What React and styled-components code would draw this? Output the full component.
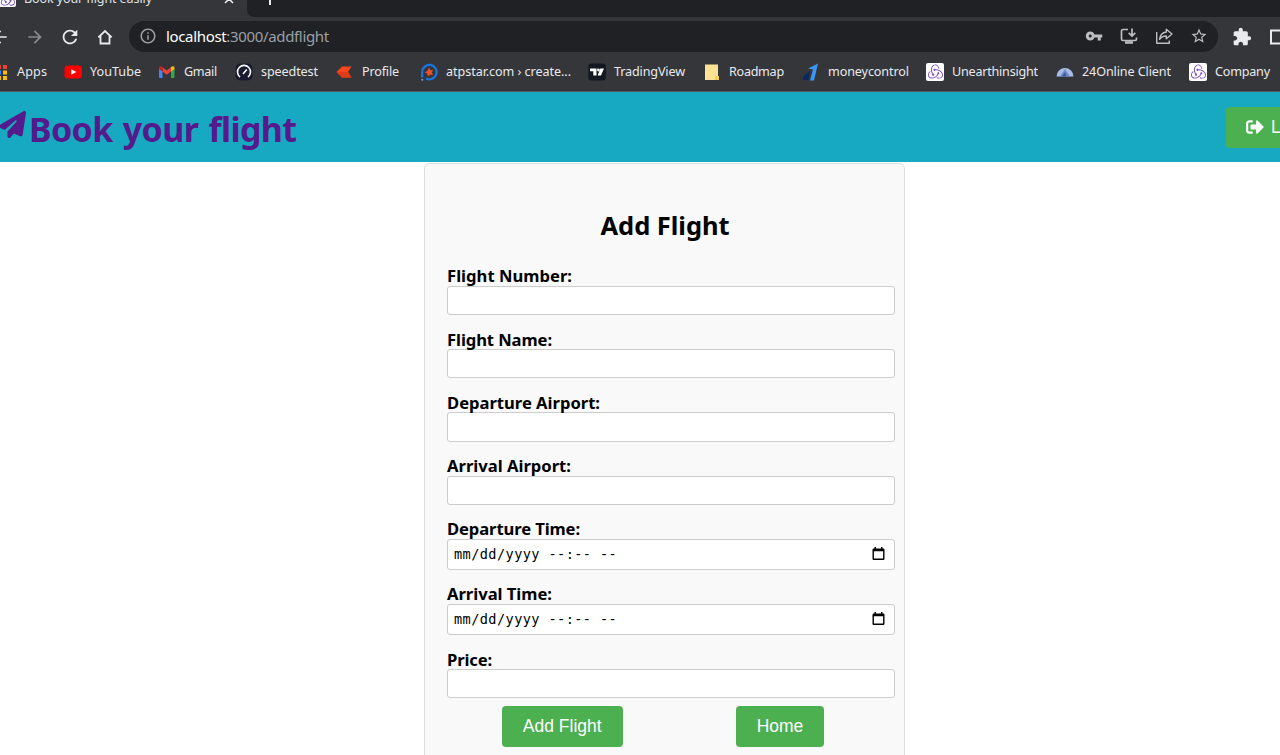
import React, { useLayoutEffect, useRef } from "react";
import styled, { createGlobalStyle } from "styled-components";
import { MdArrowBack, MdArrowForward, MdRefresh, MdInfoOutline, MdVpnKey, MdStarBorder, MdExtension } from "react-icons/md";
import { FaPaperPlane } from "react-icons/fa6";
import { FaSignOutAlt } from "react-icons/fa";
import { SiRedux } from "react-icons/si";

const GlobalStyle = createGlobalStyle`
  * { box-sizing: border-box; }
  body {
    margin: 0;
    background: #fff;
    overflow: hidden;
    font-family: "Noto Sans", "Open Sans", sans-serif;
  }
`;

const Screen = styled.div`
  width: 1280px;
  height: 755px;
  overflow: hidden;
  display: flex;
  flex-direction: column;
`;

/* Text tracked so that it fills a known width */
const Line = styled.span`
  display: inline-block;
  white-space: pre;
  flex: none;
`;

function Tracked({ width, children }) {
  const ref = useRef(null);
  useLayoutEffect(() => {
    const el = ref.current;
    el.style.letterSpacing = "0px";
    const natural = el.getBoundingClientRect().width;
    el.style.letterSpacing = `${(width - natural) / (el.textContent.length - 0.5)}px`;
  }, [width, children]);
  return <Line ref={ref}>{children}</Line>;
}

/* ---------- browser chrome ---------- */

const TabStrip = styled.div`
  flex: none;
  height: 17px;
  display: flex;
  background: #35363a;
  overflow: hidden;
`;

const ActiveTab = styled.div`
  width: 247px;
  height: 17px;
  display: flex;
  align-items: center;
  color: #dfe1e5;
  font-size: 12.5px;
  line-height: 17px;
`;

const TabIcon = styled.span`
  display: flex;
  width: 17px;
  height: 17px;
  margin: -20px 8px 0 -1px;
  align-items: center;
  justify-content: center;
  border-radius: 2px;
  background: #fff;
  color: #764abc;
`;

const TabTitle = styled.span`
  width: 200px;
  margin-top: -20px;
`;

const TabClose = styled.svg`
  width: 10px;
  height: 10px;
  margin-top: -19px;
`;

const StripRest = styled.div`
  flex: 1;
  display: flex;
  align-items: flex-start;
  background: #202124;
  border-bottom-left-radius: 7px;
  padding-left: 17px;
`;

const Toolbar = styled.div`
  flex: none;
  height: 40px;
  display: flex;
  align-items: center;
  background: #35363a;
  color: #e8eaed;
  padding-bottom: 1px;
`;

const NavIcons = styled.div`
  flex: none;
  display: flex;
  gap: 15px;
  width: 139px;
  margin-left: -10px;
  svg { width: 20px; height: 20px; flex: none; }
  svg:nth-child(2) { color: #898a8d; }
  svg:nth-child(3) { width: 22px; height: 22px; margin: -1px; }
`;

const AddressBar = styled.div`
  flex: none;
  width: 1089px;
  height: 31px;
  display: flex;
  align-items: center;
  padding: 0 10px 1px 10px;
  border-radius: 16px;
  background: #202124;
  color: #9aa0a6;
  font-size: 15px;
  > svg { width: 18px; height: 18px; margin-right: 9px; }
`;

const Host = styled.span`
  color: #fff;
`;

const BarActions = styled.div`
  margin-left: auto;
  display: flex;
  gap: 17px;
  color: #bcbec2;
  svg { width: 18px; height: 18px; }
`;

const Extensions = styled.div`
  display: flex;
  flex: none;
  margin-left: 14px;
  gap: 16px;
  svg { width: 20px; height: 20px; flex: none; }
`;

const Bookmarks = styled.div`
  flex: none;
  height: 35px;
  display: flex;
  align-items: center;
  padding-bottom: 5px;
  margin-left: -10px;
  background: #35363a;
  border-bottom: 1px solid #55585c;
`;

const Bookmark = styled.div`
  flex: none;
  width: ${(p) => p.$w}px;
  display: flex;
  align-items: center;
  gap: ${(p) => p.$gap || 8}px;
  color: #e8eaed;
  font-size: 12.6px;
  line-height: 18px;
  > svg { width: 18px; height: 18px; flex: none; }
`;

const ReduxTile = styled.span`
  flex: none;
  width: 18px;
  height: 18px;
  display: flex;
  align-items: center;
  justify-content: center;
  border-radius: 2px;
  background: #fff;
  color: #764abc;
`;

/* ---------- page ---------- */

const Header = styled.header`
  flex: none;
  height: 70px;
  display: flex;
  align-items: flex-start;
  background: #17a9c1;
`;

const Brand = styled.div`
  display: flex;
  align-items: flex-start;
  color: #551a8b;
  font-size: 34px;
  line-height: 48px;
  font-weight: 700;
  word-spacing: 2px;
  padding-top: 13px;
  > svg { width: 27px; height: 27px; margin: 6px 3px 0 -1px; }
`;

const GreenButton = styled.button`
  flex: none;
  height: 41px;
  width: ${(p) => p.$w}px;
  border: 0;
  padding: 0 0 1px;
  border-radius: 4px;
  background: #4caf50;
  color: #fff;
  font: 17.5px/38px "Liberation Sans", Arial, sans-serif;
  text-align: center;
`;

const Logout = styled(GreenButton)`
  display: flex;
  align-items: center;
  margin: 15px -46px 0 auto;
  padding: 0 0 2px 20px;
  gap: 7px;
`;

const Card = styled.main`
  flex: none;
  width: 481px;
  height: 640px;
  margin: 1px 0 0 424px;
  padding: 41px 9px 0 22px;
  border: 1px solid #ddd;
  border-radius: 6px;
  background: #f9f9f9;
`;

const Title = styled.h2`
  margin: 0 12px 21.4px 0;
  font-size: 25.5px;
  line-height: 40px;
  height: 38px;
  font-weight: 700;
  text-align: center;
`;

const Field = styled.div`
  height: ${(p) => (p.$tall ? 65.2 : 63.2)}px;
  font-size: 16.6px;
  font-weight: 700;
  line-height: 23px;
`;

const InputBox = styled.div`
  height: ${(p) => (p.$tall ? 31.2 : 29.2)}px;
  display: flex;
  align-items: center;
  justify-content: space-between;
  padding: 0 9px 1px 6px;
  border: 1px solid #ccc;
  border-radius: 3px;
  background: #fff;
  font: 13.6px "DejaVu Sans Mono", monospace;
`;

const LabelRow = styled.div`
  height: 21.6px;
`;

const Actions = styled.div`
  display: flex;
  margin-top: -4.6px;
  padding-left: 55px;
  gap: 113.5px;
`;

const HomeIcon = () => (
  <svg viewBox="0 0 20 20" fill="none" stroke="currentColor" strokeWidth="1.8">
    <path d="M3.300 10.300 10 4l6.700 6.300M5.500 8.700v7.800h9V8.700" />
  </svg>
);

const InstallIcon = () => (
  <svg viewBox="0 0 18 18" fill="none" stroke="currentColor" strokeWidth="1.7">
    <path d="M8 2.500H3a1.500 1.500 0 0 0-1.500 1.500v8A1.500 1.500 0 0 0 3 13.500h12a1.500 1.500 0 0 0 1.500-1.500v-1.500M12 1.500v7M8.700 5.800 12 9.100l3.300-3.300" />
    <path d="M5 15.500h8" strokeWidth="2.500" />
  </svg>
);

const ShareIcon = () => (
  <svg viewBox="0 0 18 18" fill="none" stroke="currentColor" strokeWidth="1.4" strokeLinejoin="round">
    <path d="M1.700 5v11.300h12.600V13.500" />
    <path d="M11.300 2.300 17 7l-5.700 4.700V9C8 9 6 10 4.600 12.300 5 8.200 7.300 5.500 11.300 5Z" />
  </svg>
);

const PanelIcon = () => (
  <svg viewBox="0 0 20 20">
    <path fill="none" stroke="currentColor" strokeWidth="2" d="M3 3.500h15v13H3z" />
    <path fill="currentColor" d="M12 3h7v14h-7z" />
  </svg>
);

const CalendarIcon = () => (
  <svg width="13" height="14" viewBox="0 0 13 14">
    <path d="M2.500 0H4v1.500h5V0h1.500v1.500h.8a1.200 1.200 0 0 1 1.200 1.200v9a1.200 1.200 0 0 1-1.200 1.200H1.700a1.200 1.200 0 0 1-1.200-1.200v-9a1.200 1.200 0 0 1 1.200-1.200h.8zM1.900 4.200v7.400h9.200V4.200z" fillRule="evenodd" />
  </svg>
);

const AppsIcon = () => (
  <svg viewBox="0 0 18 18">
    <path fill="#ea4335" d="M1 2h4v4H1zM7 2h4v4H7zM13 2h4v4h-4z" />
    <path fill="#4285f4" d="M1 7.500h4v4H1zM7 7.500h4v4H7z" />
    <path fill="#fbbc04" d="M13 7.500h4v4h-4zM7 13h4v4H7zM13 13h4v4h-4z" />
  </svg>
);

const YouTubeIcon = () => (
  <svg viewBox="0 0 18 18">
    <rect x="0.500" y="2.500" width="17.500" height="13" rx="3.200" fill="#f00" />
    <path fill="#fff" d="m7.300 6.300 5 2.750-5 2.750z" />
  </svg>
);

const GmailIcon = () => (
  <svg viewBox="0 0 18 18">
    <path fill="#4285f4" d="M1 5.500 4.500 8v7H2a1 1 0 0 1-1-1z" />
    <path fill="#34a853" d="M13 8l3.500-2.500V14a1 1 0 0 1-1 1H13z" />
    <path fill="#ea4335" d="M4.500 4.200 8.750 7.500 13 4.200v4.300l-4.250 3.300L4.500 8.500z" />
    <path fill="#c5221f" d="M1 5c0-1.900 1.800-2.400 3.500-1v4.500L1 6z" />
    <path fill="#fbbc04" d="M16.500 5c0-1.900-1.800-2.400-3.500-1v4.500L16.500 6z" />
  </svg>
);

const SpeedIcon = () => (
  <svg viewBox="0 0 18 18" fill="none" stroke="#fff" strokeWidth="1.6">
    <rect x="0.500" y="0.500" width="17" height="17" rx="5" fill="#171a30" stroke="none" />
    <path d="M5 14a6.500 6.500 0 1 1 8 0M8 11l3.800-4.500" />
  </svg>
);

const KiteIcon = () => (
  <svg viewBox="0 0 18 18">
    <path fill="#f6461a" d="M7 3.500h9.500L13 9l3.500 5.500H7L1.500 9z" />
    <path fill="#df3c1a" d="M1.500 9H13l3.500 5.500H7z" />
  </svg>
);

const AtpIcon = () => (
  <svg viewBox="0 0 18 18">
    <path d="M2.200 14.500V9a7.200 7.200 0 1 1 4 6.500" fill="none" stroke="#1877e6" strokeWidth="2.200" />
    <circle cx="2.300" cy="16.800" r="1" fill="#6aa8ee" />
    <path fill="#f0522d" d="m9 4.500 1.200 2.700 3-.4-1.500 2.500 1.300 2.700-2.900-.4L8 13.500l-.8-3-2.500-1.300 2.700-1.300z" />
  </svg>
);

const TradingIcon = () => (
  <svg viewBox="0 0 18 18">
    <rect x="0.300" y="0.500" width="17.500" height="17" rx="3" fill="#131722" />
    <path fill="#fff" d="M2 5.500h6.500v7H5.300V8.300H2zM12.300 5.500H16l-3 7H9.600z" />
    <circle cx="10.400" cy="7" r="1.400" fill="#fff" />
  </svg>
);

const NoteIcon = () => (
  <svg viewBox="0 0 18 18">
    <path fill="#fde293" d="M2 1.500h13V13h1v4H2z" />
    <path fill="#f5cf5b" d="M12 13h4v4h-4z" />
  </svg>
);

const MoneyIcon = () => (
  <svg viewBox="0 0 18 18">
    <path fill="#0b2a5c" d="M1 14 8 7.500 6.500 17H1z" />
    <path fill="#3b96f5" d="M6 5.500 16 .500 12 17.500H8L11 6.500z" />
  </svg>
);

const OnlineIcon = () => (
  <svg viewBox="0 0 18 18">
    <path fill="#a9bce6" d="M.5 13.500a8.500 8.500 0 0 1 17 0z" />
    <path fill="#6f8ac6" d="M4 13.500 9 6l5 7.500z" />
    <path fill="#3f5b9c" d="m6 13.500 3-4.500 1.500 4.500z" />
  </svg>
);

const ReduxIcon = () => (
  <ReduxTile><SiRedux size={15} /></ReduxTile>
);

const bookmarks = [
  { icon: AppsIcon, name: "Apps", w: 74, text: 30, gap: 9 },
  { icon: YouTubeIcon, name: "YouTube", w: 94, text: 51 },
  { icon: GmailIcon, name: "Gmail", w: 77, text: 33 },
  { icon: SpeedIcon, name: "speedtest", w: 100, text: 57 },
  { icon: KiteIcon, name: "Profile", w: 85, text: 37, gap: 9 },
  { icon: AtpIcon, name: "atpstar.com › create...", w: 168, text: 125 },
  { icon: TradingIcon, name: "TradingView", w: 115, text: 71 },
  { icon: NoteIcon, name: "Roadmap", w: 99, text: 55 },
  { icon: MoneyIcon, name: "moneycontrol", w: 124, text: 81 },
  { icon: ReduxIcon, name: "Unearthinsight", w: 130, text: 86 },
  { icon: OnlineIcon, name: "24Online Client", w: 133, text: 89 },
  { icon: ReduxIcon, name: "Company", w: 92, text: 55 },
];

const fields = [
  { label: "Flight Number:", w: 125 },
  { label: "Flight Name:", w: 105 },
  { label: "Departure Airport:", w: 153 },
  { label: "Arrival Airport:", w: 124 },
  { label: "Departure Time:", w: 133, date: true },
  { label: "Arrival Time:", w: 105, date: true },
  { label: "Price:", w: 45 },
];

export default function App() {
  return (
    <Screen>
      <GlobalStyle />
      <TabStrip>
        <ActiveTab>
          <TabIcon><SiRedux size={14} /></TabIcon>
          <TabTitle><Tracked width={128}>Book your flight easily</Tracked></TabTitle>
          <TabClose viewBox="0 0 10 10" stroke="#e8eaed" strokeWidth="1.6">
            <path d="m1 1 8 8M9 1 1 9" />
          </TabClose>
        </ActiveTab>
        <StripRest>
          <svg width="12" height="5" viewBox="0 0 12 5"><path d="M6 0v5" stroke="#e8eaed" strokeWidth="2" /></svg>
        </StripRest>
      </TabStrip>
      <Toolbar>
        <NavIcons>
          <MdArrowBack />
          <MdArrowForward />
          <MdRefresh />
          <HomeIcon />
        </NavIcons>
        <AddressBar>
          <MdInfoOutline />
          <Tracked width={163}><Host>localhost</Host>:3000/addflight</Tracked>
          <BarActions>
            <MdVpnKey />
            <InstallIcon />
            <ShareIcon />
            <MdStarBorder />
          </BarActions>
        </AddressBar>
        <Extensions>
          <MdExtension />
          <PanelIcon />
        </Extensions>
      </Toolbar>
      <Bookmarks>
        {bookmarks.map(({ icon: Icon, name, w, text, gap }) => (
          <Bookmark key={name} $w={w} $gap={gap}>
            <Icon />
            <Tracked width={text}>{name}</Tracked>
          </Bookmark>
        ))}
      </Bookmarks>
      <Header>
        <Brand>
          <FaPaperPlane />
          <Tracked width={268}>Book your flight</Tracked>
        </Brand>
        <Logout $w={100}><FaSignOutAlt size={18} />Logout</Logout>
      </Header>
      <Card>
        <Title><Tracked width={129}>Add Flight</Tracked></Title>
        {fields.map(({ label, w, date }) => (
          <Field key={label} $tall={date}>
            <LabelRow><Tracked width={w}>{label}</Tracked></LabelRow>
            <InputBox $tall={date}>
              {date && <Tracked width={163}>mm/dd/yyyy --:-- --</Tracked>}
              {date && <CalendarIcon />}
            </InputBox>
          </Field>
        ))}
        <Actions>
          <GreenButton $w={120.5}>Add Flight</GreenButton>
          <GreenButton $w={88}>Home</GreenButton>
        </Actions>
      </Card>
    </Screen>
  );
}
